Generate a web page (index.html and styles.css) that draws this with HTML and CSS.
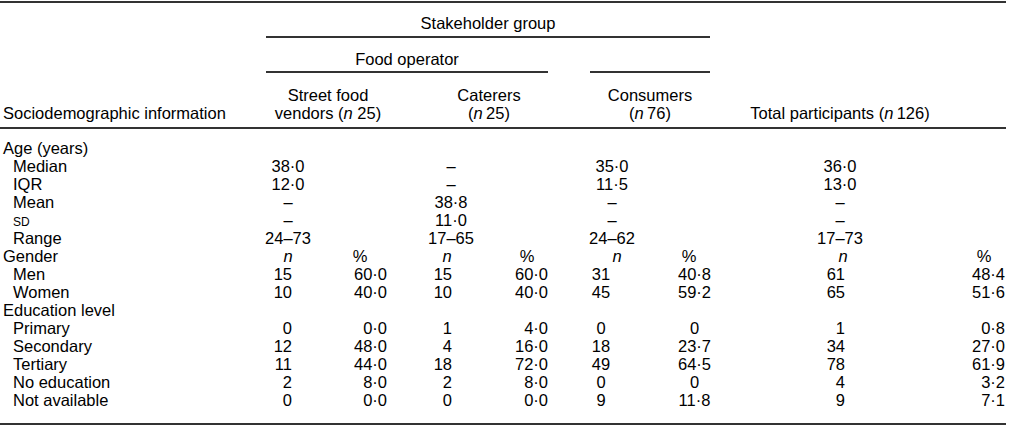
FILE: index.html
```html
<!DOCTYPE html>
<html lang="en">
<head>
<meta charset="utf-8">
<title>Sociodemographic information by stakeholder group</title>
<link rel="stylesheet" href="styles.css">
</head>
<body>
<div class="tbl">
  <div class="thead">
    <div class="stake">Stakeholder group</div>
    <div class="food">Food operator</div>
    <div class="consline"></div>
    <div class="h-label">Sociodemographic information</div>
    <div class="h-street">Street food<br>vendors (<i>n</i> 25)</div>
    <div class="h-cat">Caterers<br>(<i>n</i>&#8201;25)</div>
    <div class="h-cons">Consumers<br>(<i>n</i>&#8201;76)</div>
    <div class="h-total">Total participants (<i>n</i>&#8201;126)</div>
  </div>
  <div class="tbody">
    <div class="row"><div class="lbl grp">Age (years)</div></div>
    <div class="row stat"><div class="lbl sub">Median</div><div>38·0</div><div></div><div>–</div><div></div><div>35·0</div><div></div><div>36·0</div><div></div></div>
    <div class="row stat"><div class="lbl sub">IQR</div><div>12·0</div><div></div><div>–</div><div></div><div>11·5</div><div></div><div>13·0</div><div></div></div>
    <div class="row stat"><div class="lbl sub">Mean</div><div>–</div><div></div><div>38·8</div><div></div><div>–</div><div></div><div>–</div><div></div></div>
    <div class="row stat"><div class="lbl sub"><span class="sc">sd</span></div><div>–</div><div></div><div>11·0</div><div></div><div>–</div><div></div><div>–</div><div></div></div>
    <div class="row stat"><div class="lbl sub">Range</div><div>24–73</div><div></div><div>17–65</div><div></div><div>24–62</div><div></div><div>17–73</div><div></div></div>
    <div class="row units"><div class="lbl">Gender</div><div>n</div><div>%</div><div>n</div><div>%</div><div>n</div><div>%</div><div>n</div><div>%</div></div>
    <div class="row num"><div class="lbl sub">Men</div><div>15</div><div>60·0</div><div>15</div><div>60·0</div><div>31</div><div>40·8</div><div>61</div><div>48·4</div></div>
    <div class="row num"><div class="lbl sub">Women</div><div>10</div><div>40·0</div><div>10</div><div>40·0</div><div>45</div><div>59·2</div><div>65</div><div>51·6</div></div>
    <div class="row"><div class="lbl grp">Education level</div></div>
    <div class="row num"><div class="lbl sub">Primary</div><div>0</div><div>0·0</div><div>1</div><div>4·0</div><div>0</div><div>0</div><div>1</div><div>0·8</div></div>
    <div class="row num"><div class="lbl sub">Secondary</div><div>12</div><div>48·0</div><div>4</div><div>16·0</div><div>18</div><div>23·7</div><div>34</div><div>27·0</div></div>
    <div class="row num"><div class="lbl sub">Tertiary</div><div>11</div><div>44·0</div><div>18</div><div>72·0</div><div>49</div><div>64·5</div><div>78</div><div>61·9</div></div>
    <div class="row num"><div class="lbl sub">No education</div><div>2</div><div>8·0</div><div>2</div><div>8·0</div><div>0</div><div>0</div><div>4</div><div>3·2</div></div>
    <div class="row num"><div class="lbl sub">Not available</div><div>0</div><div>0·0</div><div>0</div><div>0·0</div><div>9</div><div>11·8</div><div>9</div><div>7·1</div></div>
  </div>
</div>
</body>
</html>
```

FILE: styles.css
```css
html, body {
  margin: 0;
  padding: 0;
  background: #ffffff;
}

body {
  font-family: "Liberation Sans", Arial, Helvetica, sans-serif;
  font-size: 16.5px;
  line-height: 18px;
  color: #000000;
}

.tbl {
  width: 1006px;
  margin-top: 1px;
  border-top: 2px solid #333333;
}

.thead,
.tbody {
  display: grid;
  grid-template-columns: 266px 44px 90px 102px 58px 104px 61px 230px 51px;
}

.thead {
  border-bottom: 2px solid #333333;
}

.tbody {
  padding-top: 10px;
  padding-bottom: 14px;
  border-bottom: 2px solid #333333;
}

.tbody div {
  white-space: nowrap;
}

i {
  font-style: italic;
}

/* header */
.stake {
  grid-row: 1;
  grid-column: 2 / 8;
  margin-right: 15px;
  padding: 11px 0 4px;
  text-align: center;
  border-bottom: 2px solid #333333;
}

.food {
  grid-row: 2;
  grid-column: 2 / 6;
  margin-right: 12px;
  padding: 12px 0 3px;
  text-align: center;
  border-bottom: 2px solid #333333;
}

.consline {
  grid-row: 2;
  grid-column: 6 / 8;
  margin-left: 30px;
  margin-right: 15px;
  border-bottom: 2px solid #333333;
}

.h-label,
.h-street,
.h-cat,
.h-cons,
.h-total {
  grid-row: 3;
  padding-top: 13px;
  padding-bottom: 5px;
  white-space: nowrap;
}

.h-label {
  grid-column: 1;
  align-self: end;
  padding-left: 3px;
}

.h-street {
  grid-column: 2 / 4;
  text-align: center;
  padding-right: 10px;
}

.h-cat {
  grid-column: 4 / 6;
  text-align: center;
  padding-left: 18px;
}

.h-cons {
  grid-column: 6 / 8;
  text-align: center;
  padding-left: 15px;
}

.h-total {
  grid-column: 8;
  align-self: end;
  text-align: center;
}

/* body */
.row {
  display: contents;
}

.lbl {
  padding-left: 3px;
}

.grp {
  grid-column: 1 / -1;
}

.sub {
  padding-left: 13px;
}

.sc {
  font-variant: small-caps;
}

.stat > div:not(.lbl) {
  display: flex;
  justify-content: center;
}

.num > :nth-child(2) { text-align: right; padding-right: 18px; }
.num > :nth-child(3) { text-align: right; padding-right: 13px; }
.num > :nth-child(4) { text-align: right; padding-right: 50px; }
.num > :nth-child(5) { text-align: right; padding-right: 12px; }
.num > :nth-child(6) { text-align: center; padding-right: 22px; }
.num > :nth-child(7) { text-align: center; }
.num > :nth-child(8) { text-align: right; padding-right: 110px; }
.num > :nth-child(9) { text-align: right; padding-right: 1px; }

.units > div:not(.lbl) {
  text-align: center;
}

.units > :nth-child(2n) {
  font-style: italic;
}

.units > :nth-child(3) { padding-left: 10px; }
.units > :nth-child(4) { padding-right: 8px; }
.units > :nth-child(5) { padding-right: 8px; }
.units > :nth-child(6) { padding-left: 10px; }
.units > :nth-child(7) { padding-right: 11px; }
.units > :nth-child(8) { padding-left: 6px; }
.units > :nth-child(9) { padding-left: 7px; }
```
